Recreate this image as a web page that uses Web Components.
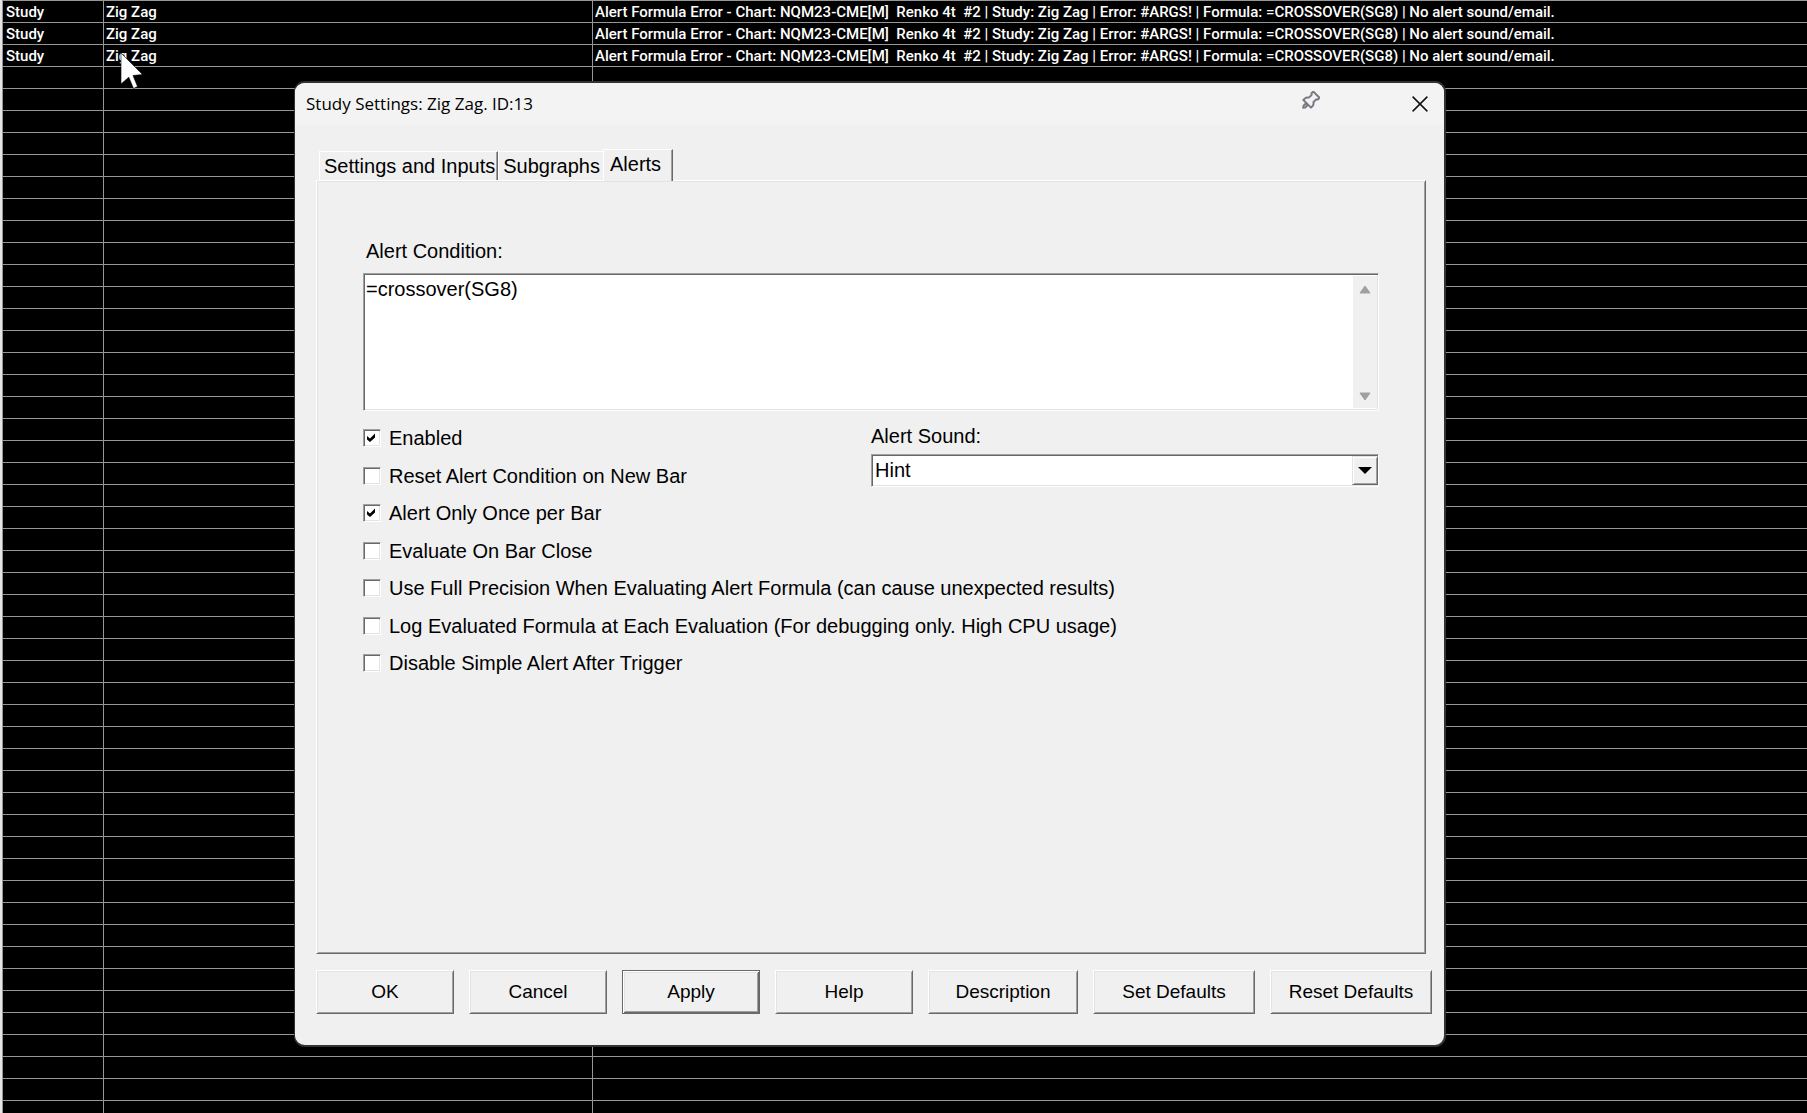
<!DOCTYPE html>
<html lang="en">
<head>
<meta charset="utf-8">
<title>Study Settings</title>
<style>
  html, body { margin: 0; height: 100%; background: #000; overflow: hidden; }
  body { position: relative; font-family: "Liberation Sans", Arial, sans-serif; font-size: 20px; color: #000; }
</style>
</head>
<body>
<message-log></message-log>
<study-dialog heading="Study Settings: Zig Zag. ID:13">
  <dialog-tab slot="tabs">Settings and Inputs</dialog-tab>
  <dialog-tab slot="tabs">Subgraphs</dialog-tab>
  <dialog-tab slot="tabs" selected>Alerts</dialog-tab>
  <alert-form></alert-form>
  <push-button slot="actions">OK</push-button>
  <push-button slot="actions">Cancel</push-button>
  <push-button slot="actions" default>Apply</push-button>
  <push-button slot="actions">Help</push-button>
  <push-button slot="actions" style="--basis:150px">Description</push-button>
  <push-button slot="actions" style="--basis:162px">Set Defaults</push-button>
  <push-button slot="actions" style="--basis:162px">Reset Defaults</push-button>
</study-dialog>
<mouse-pointer></mouse-pointer>

<script>
  function define(name, html, setup) {
    customElements.define(name, class extends HTMLElement {
      connectedCallback() {
        if (this.shadowRoot) return;
        this.attachShadow({ mode: "open" }).innerHTML = html;
        if (setup) setup(this, this.shadowRoot);
      }
    });
  }

  define("message-log", `
    <style>
      :host { display: block; height: 100%; overflow: hidden; border-left: 2px solid #e6e6e6; box-sizing: border-box;
              font: 500 15px/19px Roboto, "Liberation Sans", sans-serif; color: #fff; }
      table { width: 100%; border-collapse: separate; border-spacing: 0; table-layout: fixed; }
      td { height: 19px; padding: 2px 0 0 2px; border-top: 1px solid #969696; border-left: 1px solid #969696; white-space: pre; }
      td:first-child { padding-left: 3px; }
    </style>
    <table><colgroup><col style="width:101px"><col style="width:489px"><col></colgroup><tbody></tbody></table>`,
    (host, root) => {
      const message = "Alert Formula Error - Chart: NQM23-CME[M]  Renko 4t  #2 | Study: Zig Zag | Error: #ARGS! | Formula: =CROSSOVER(SG8) | No alert sound/email.";
      const body = root.querySelector("tbody");
      const total = Math.ceil(window.innerHeight / 22);
      for (let i = 0; i < total; i++) {
        const row = body.insertRow();
        for (const text of i < 3 ? ["Study", "Zig Zag", message] : ["", "", ""]) row.insertCell().textContent = text;
      }
    });

  define("study-dialog", `
    <style>
      :host { position: absolute; left: 294px; right: 361px; top: 81px; box-sizing: border-box; border: 2px solid #333; border-left-width: 1px;
              border-radius: 11px; overflow: hidden; background: #f0f0f0; }
      header { display: flex; align-items: center; height: 42px; background: #f3f3f3; padding: 0 16px 0 11px; }
      h1 { flex: 1; margin: 0; font: 400 17px/42px "Open Sans", "Noto Sans", sans-serif; }
      button { display: flex; border: 0; padding: 0; background: none; }
      .pin { margin: 0 92px 6px 0; }
      .body { padding: 24px 12px 31px 21px; }
      nav { display: flex; align-items: flex-end; padding-left: 3px; height: 32px; }
      .panel { margin: -1px 6px 0 0; min-height: 774px; box-sizing: border-box; border: 1px solid; border-color: #fff #696969 #696969 #fff;
               box-shadow: inset 1px 1px #e3e3e3, inset -1px -1px #a0a0a0; padding: 58px 46px 0; }
      footer { display: flex; gap: 15px; margin-top: 16px; }
    </style>
    <header>
      <h1></h1>
      <button class="pin" aria-label="Pin window">
        <svg width="20" height="20" viewBox="0 0 20 20" fill="#f3f3f3" stroke="#7c7984" stroke-width="2" stroke-linejoin="round" stroke-linecap="round">
          <g transform="rotate(45 10 10)">
            <path d="M8.8 14 H11.2 V18 L10 19.6 L8.8 18 Z"/>
            <path d="M5.6 1 H14.4 V3.4 L13.2 4.6 V8.4 Q15.4 9.6 15.4 12 V14 H4.6 V12 Q4.6 9.6 6.8 8.4 V4.6 L5.6 3.4 Z"/>
          </g>
        </svg>
      </button>
      <button aria-label="Close">
        <svg width="16" height="16" viewBox="0 0 16 16" stroke="#111" stroke-width="1.5"><path d="M.6 .6 L15.4 15.4 M15.4 .6 L.6 15.4"/></svg>
      </button>
    </header>
    <div class="body">
      <nav role="tablist"><slot name="tabs"></slot></nav>
      <div class="panel"><slot></slot></div>
      <footer><slot name="actions"></slot></footer>
    </div>`,
    (host, root) => { root.querySelector("h1").textContent = host.getAttribute("heading"); });

  define("dialog-tab", `
    <style>
      :host { display: block; }
      button { display: block; height: 29px; box-sizing: border-box; margin: 0; padding: 0 3px 0 4px; border: 0 solid; border-color: #fff #696969 #fff #fff;
               border-width: 1px 1px 0 1px; background: #f0f0f0; font: inherit; line-height: 26px; color: #000; white-space: nowrap; }
      :host(:first-child) button { padding-right: 2px; box-shadow: inset -1px 0 #a0a0a0; }
      :host(:not([selected])) { margin-bottom: 1px; }
      :host([selected]) { position: relative; margin-left: -1px; }
      :host([selected]) button { height: 32px; padding: 0 11px 3px 6px; box-shadow: inset -1px 0 #a0a0a0; }
    </style>
    <button role="tab"><slot></slot></button>`,
    (host, root) => root.querySelector("button").setAttribute("aria-selected", host.hasAttribute("selected")));

  define("push-button", `
    <style>
      :host { display: block; flex: 1 1 var(--basis, 138px); font-size: 19px; }
      button { width: 100%; height: 44px; box-sizing: border-box; padding: 0; border: 1px solid; border-color: #fff #696969 #696969 #fff;
               box-shadow: inset 1px 1px #e3e3e3, inset -1px -1px #a0a0a0; background: #f0f0f0; font: inherit; color: #000; white-space: nowrap; }
      :host([default]) button { border-color: #696969;
               box-shadow: inset 1px 1px #fff, inset -1px -1px #696969, inset 2px 2px #e3e3e3, inset -2px -2px #a0a0a0; }
    </style>
    <button type="button"><slot></slot></button>`);

  define("check-row", `
    <style>
      :host { display: block; }
      label { display: flex; align-items: center; gap: 8px; line-height: 24px; white-space: nowrap; }
      .box { display: grid; width: 18px; height: 18px; }
      .box > * { grid-area: 1 / 1; }
      input { appearance: none; margin: 0; width: 18px; height: 18px; border: 1px solid; border-color: #a0a0a0 #fff #fff #a0a0a0;
              box-shadow: inset 1px 1px #696969, inset -1px -1px #e3e3e3; background: #fff; }
      svg { visibility: hidden; pointer-events: none; }
      input:checked + svg { visibility: visible; }
    </style>
    <label><span class="box"><input type="checkbox">
      <svg width="18" height="18" viewBox="0 0 18 18"><path d="M4 7 L7 9.6 L12 4.4 V8.4 L7 13 L4 10.6 Z"/></svg></span>
      <span><slot></slot></span></label>`,
    (host, root) => { root.querySelector("input").checked = host.hasAttribute("checked"); });

  define("alert-form", `
    <style>
      :host { display: block; }
      label { display: block; line-height: 24px; }
      .condition-label { padding: 0 3px 10px; }
      .condition { display: flex; height: 138px; box-sizing: border-box; border: 1px solid; border-color: #a0a0a0 #fff #fff #a0a0a0;
                   box-shadow: inset 1px 1px #696969, inset -1px -1px #e3e3e3; padding: 2px 1px 2px 2px; background: #fff; background-clip: padding-box; }
      textarea { flex: 1; border: 0; padding: 1px 0 0; resize: none; outline: 0; overflow: hidden; background: none; font: inherit; line-height: 24px; color: #000; }
      .scroll { display: flex; flex-direction: column; justify-content: space-between; align-items: center; width: 24px; box-sizing: border-box;
                padding: 9px 0 7px; background: #f0f0f0; }
      .options { display: flex; margin-top: 13px; }
      .checks { flex: 1; width: 0; display: flex; flex-direction: column; justify-content: space-between; height: 249px; margin-top: 2px; }
      .sound { flex: 0 0 50%; }
      .sound label { padding-bottom: 6px; }
      .select { display: grid; }
      .select > * { grid-area: 1 / 1; }
      select { appearance: none; width: 100%; height: 33px; box-sizing: border-box; margin: 0; padding: 0 28px 1px 3px; border: 1px solid; border-radius: 0;
               border-color: #a0a0a0 #fff #fff #a0a0a0; box-shadow: inset 1px 1px #696969, inset -1px -1px #e3e3e3; background: #fff; font: inherit; color: #000; }
      .drop { justify-self: end; display: grid; place-items: center; width: 26px; margin: 2px 1px 2px 0; box-sizing: border-box; pointer-events: none;
              background: #f0f0f0; border: 1px solid; border-color: #e3e3e3 #696969 #696969 #e3e3e3; box-shadow: inset 1px 1px #fff, inset -1px -1px #a0a0a0; }
    </style>
    <label class="condition-label" for="condition">Alert Condition:</label>
    <div class="condition">
      <textarea id="condition" spellcheck="false">=crossover(SG8)</textarea>
      <div class="scroll">
        <svg width="12" height="9" viewBox="0 0 12 9"><path d="M6 1 L11 8 H1 Z" fill="#a0a0a0" stroke="#a0a0a0" stroke-linejoin="round"/></svg>
        <svg width="12" height="9" viewBox="0 0 12 9"><path d="M6 8 L11 1 H1 Z" fill="#a0a0a0" stroke="#a0a0a0" stroke-linejoin="round"/></svg>
      </div>
    </div>
    <div class="options">
      <div class="checks">
        <check-row checked>Enabled</check-row>
        <check-row>Reset Alert Condition on New Bar</check-row>
        <check-row checked>Alert Only Once per Bar</check-row>
        <check-row>Evaluate On Bar Close</check-row>
        <check-row>Use Full Precision When Evaluating Alert Formula (can cause unexpected results)</check-row>
        <check-row>Log Evaluated Formula at Each Evaluation (For debugging only. High CPU usage)</check-row>
        <check-row>Disable Simple Alert After Trigger</check-row>
      </div>
      <div class="sound">
        <label for="sound">Alert Sound:</label>
        <div class="select">
          <select id="sound"><option>Hint</option></select>
          <span class="drop"><svg width="14" height="7" viewBox="0 0 14 7"><path d="M0 0 H14 L7 7 Z"/></svg></span>
        </div>
      </div>
    </div>`);

  define("mouse-pointer", `
    <style>
      :host { position: absolute; left: 120px; top: 53px; pointer-events: none; }
      svg { display: block; }
    </style>
    <svg width="24" height="38" viewBox="0 0 24 38"><path d="M1 0 L22.5 21.5 L13 22.5 L17.5 33.5 L13.5 35.5 L8.8 24.2 L1 31 Z" fill="#fff" stroke="#000" stroke-width=".6"/></svg>`);
</script>
</body>
</html>
